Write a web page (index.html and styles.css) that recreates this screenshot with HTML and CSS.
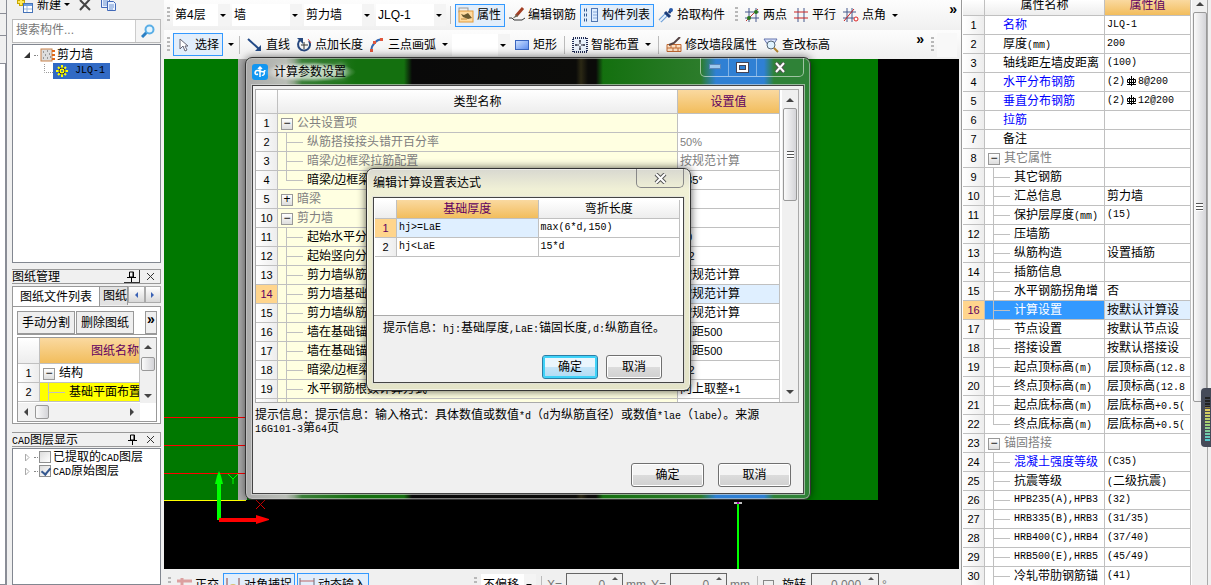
FILE: index.html
```html
<!DOCTYPE html>
<html lang="zh-CN">
<head>
<meta charset="utf-8">
<title>钢筋算量</title>
<link rel="stylesheet" href="styles.css">
</head>
<body>
<div class="rail"><i></i><i></i><b></b></div>
<aside class="left">
  <div class="mini-bar">
    <button class="flat"><svg width="18" height="16"><path d="M5 1v8M1 5h8" stroke="#c9a800" stroke-width="4"/><path d="M5 2v6M2 5h6" stroke="#ffe95a" stroke-width="2"/><rect x="7.500" y="6.500" width="9" height="9" fill="#fff" stroke="#4573b8"/><path d="M8 8h8" stroke="#6f9ee0" stroke-width="2"/><path d="M8 12h8M11 9v6" stroke="#9ab7de"/></svg>新建<span class="caret"></span></button>
    <button class="flat" aria-label="删除"><svg width="14" height="14"><path d="M2 2l10 10M12 1L2 12" stroke="#444" stroke-width="2" fill="none"/></svg></button>
    <button class="flat" aria-label="复制"><svg width="18" height="16"><path d="M1.500 1.500h8v9h-8z" fill="#eaf2ff" stroke="#4169b8"/><path d="M3 4h5M3 6h5M3 8h4" stroke="#6f94d0"/><path d="M7.500 4.500h6l2 2v7h-8z" fill="#eaf2ff" stroke="#4169b8"/><path d="M9 8h5M9 10h5M9 12h4" stroke="#6f94d0"/></svg></button>
  </div>
  <div class="search"><input type="text" placeholder="搜索构件..." aria-label="搜索构件"><button class="flat" aria-label="搜索"><svg width="14" height="14"><path d="M6 8L1 13" stroke="#2b7fc4" stroke-width="3"/><circle cx="8.500" cy="5.500" r="4" fill="#e4f5ff" stroke="#5aaee6" stroke-width="2"/></svg></button></div>
  <div class="tree">
    <div class="node"><svg width="9" height="9"><path d="M7 1v6H1z" fill="#333"/></svg><span class="dots"></span><svg width="15" height="14"><rect x="1" y="1" width="11" height="12" fill="#ddd" stroke="#c9824b"/><path d="M3 4h1M7 3h1M5 7h1M9 6h1M3 10h1M7 10h1M10 9h1" stroke="#555"/><path d="M12 3h3M12 7h3M12 11h3" stroke="#e06b1c" stroke-width="2"/></svg><span>剪力墙</span></div>
    <div class="node leaf"><svg class="elbow" width="9" height="14"><path d="M.5 0v8.500H9" fill="none" stroke="#999" stroke-dasharray="1 1"/></svg><span class="sel"><svg width="12" height="12"><path d="M6 0v12M0 6h12M2 2l8 8M10 2l-8 8" stroke="#ff0" stroke-width="2"/><circle cx="6" cy="6" r="3" fill="#ff0" stroke="#333"/><circle cx="6" cy="6" r="1" fill="#315fb5"/></svg><span class="m">JLQ-1</span></span></div>
  </div>
  <div class="dock first"><span>图纸管理</span><button class="pin raised" aria-label="固定"><svg width="9" height="11"><path d="M2.500 1h4v5h-4zM0 6.500h9M4.500 7v4M6 1v5" fill="none" stroke="#000"/></svg></button><button class="pin" aria-label="关闭"><svg width="9" height="9"><path d="M1 1l7 7M8 1L1 8" stroke="#333"/></svg></button></div>
  <div class="tabs"><button class="tab on">图纸文件列表</button><button class="tab">图纸</button><button class="arr" aria-label="向左"><span class="tl"></span></button><button class="arr" aria-label="向右"><span class="tr"></span></button></div>
  <div class="sheet">
    <div class="sheet-bar"><button>手动分割</button><button>删除图纸</button><button class="more">»</button></div>
    <div class="sheet-grid">
      <div class="clip"><table class="grid draw"><colgroup><col class="cn"><col></colgroup>
        <thead><tr><th></th><th class="gold">图纸名称</th></tr></thead>
        <tbody><tr><th>1</th><td class="g"><button class="box">−</button>结构</td></tr><tr><th>2</th><td class="c yel">基础平面布置</td></tr></tbody></table></div>
      <div class="vs"><span class="tu"></span><span class="thumb"></span><span class="td"></span></div>
      <div class="hs"><span class="tl"></span><span class="thumb"></span><span class="tr"></span></div>
    </div>
  </div>
  <div class="dock second"><span><span class="m">CAD</span>图层显示</span><button class="pin" aria-label="固定"><svg width="9" height="11"><path d="M2.500 1h4v5h-4zM0 6.500h9M4.500 7v4M6 1v5" fill="none" stroke="#000"/></svg></button><button class="pin" aria-label="关闭"><svg width="9" height="9"><path d="M1 1l7 7M8 1L1 8" stroke="#333"/></svg></button></div>
  <div class="layers">
    <label><svg width="5" height="9"><path d="M.5 1v7L4 4.500z" fill="#fff" stroke="#aaa"/></svg><span class="dots"></span><input type="checkbox"><span>已提取的<span class="m">CAD</span>图层</span></label>
    <label><svg width="5" height="9"><path d="M.5 1v7L4 4.500z" fill="#fff" stroke="#aaa"/></svg><span class="dots"></span><input type="checkbox" checked><span><span class="m">CAD</span>原始图层</span></label>
  </div>
</aside>

<main>
  <div class="bar">
    <span class="grip"></span>
    <span class="combo w1"><select aria-label="楼层"><option>第4层</option></select></span>
    <span class="combo w2"><select aria-label="构件类别"><option>墙</option></select></span>
    <span class="combo w2"><select aria-label="构件类型"><option>剪力墙</option></select></span>
    <span class="combo w2"><select aria-label="构件名称"><option>JLQ-1</option></select></span>
    <span class="sep"></span>
    <button class="tool on"><svg width="16" height="16"><rect x="1" y="1" width="9" height="4" fill="#eee" stroke="#999"/><rect x="1" y="4" width="14" height="11" fill="#ffdba0" stroke="#e09a3c"/><path d="M3 7l3 1 4-2 4 5-4 1-5-2z" fill="#6a5a30"/><path d="M3 12h6" stroke="#b98536"/></svg>属性</button>
    <button class="tool"><svg width="16" height="16"><path d="M0 11h3l2 2h8l3-2" fill="none" stroke="#333"/><path d="M14 1L7 9" stroke="#a33f24" stroke-width="3"/><path d="M8 7l-5 5 6-3z" fill="#665"/></svg>编辑钢筋</button>
    <button class="tool on"><svg width="16" height="16"><path d="M1 3h4M1 8h4M1 13h4" stroke="#33588f" stroke-width="3" stroke-dasharray="1 1"/><rect x="8.500" y="1.500" width="6" height="13" fill="#dcecff" stroke="#5276b0"/><path d="M10 5h4M10 8h4M10 11h4" stroke="#86a8db"/></svg>构件列表</button>
    <button class="tool"><svg width="16" height="16"><path d="M2 14l7-7" stroke="#6d9ed6" stroke-width="4"/><path d="M2 14l6-6" stroke="#e7f3ff" stroke-width="2"/><path d="M7 5l5 5M11 6l2-3" stroke="#1c3d7a" stroke-width="3"/><circle cx="13" cy="3" r="2" fill="#2859a8"/></svg>拾取构件</button>
    <span class="grip next"></span>
    <button class="tool"><svg width="16" height="16"><path d="M5 1v14M12 1v14M1 5h14M1 11h14" stroke="#44588c"/><path d="M2 14L14 2" stroke="#b33"/><circle cx="5" cy="11" r="2" fill="#2a7a20"/><circle cx="12" cy="5" r="2" fill="#2a7a20"/></svg>两点</button>
    <button class="tool"><svg width="16" height="16"><path d="M5 1v14M11 1v14" stroke="#44588c"/><path d="M1 5h14M1 11h14" stroke="#c22"/></svg>平行</button>
    <button class="tool"><svg width="17" height="16"><path d="M5 1v14M10 1v14M1 5h13M1 11h11" stroke="#44588c"/><path d="M2 14L12 2" stroke="#c22"/><circle cx="14" cy="12" r="2" fill="#fff" stroke="#d22"/></svg>点角<span class="caret"></span></button>
    <span class="more">»</span>
  </div>
  <div class="bar two">
    <span class="grip"></span>
    <button class="tool on pick"><svg width="16" height="16"><path d="M4 2v10l3-3 2 5 2-1-2-4h3z" fill="#fff" stroke="#667" /></svg>选择</button><span class="caret"></span>
    <span class="sep"></span>
    <button class="tool"><svg width="16" height="16"><path d="M1 2l11 10" stroke="#234a86" stroke-width="2"/><path d="M14 8v6H8z" fill="#234a86"/></svg>直线</button>
    <button class="tool"><svg width="16" height="16"><path d="M4 3a6 6 0 1 0 9 1" fill="none" stroke="#27487f" stroke-width="2"/><path d="M1 1h6v6z" fill="#27487f"/><path d="M8 5v7M5 8h7" stroke="#333"/><path d="M12 2l3 4" stroke="#d55"/></svg>点加长度</button>
    <button class="tool"><svg width="16" height="16"><path d="M2 14C3 7 6 3 13 2" fill="none" stroke="#3768b0" stroke-width="2"/><path d="M1 12h3v3H1zM4 4h3v3H4zM11 1h3v3h-3z" fill="#e0563c"/></svg>三点画弧<span class="caret far"></span></button>
    <span class="combo w3"><select aria-label="画法"><option></option></select></span>
    <button class="tool"><svg width="16" height="16"><defs><linearGradient id="b" x2="1" y2="1"><stop stop-color="#cfe2ff"/><stop offset="1" stop-color="#5c8df0"/></linearGradient></defs><rect x="1.500" y="3.500" width="13" height="9" fill="url(#b)" stroke="#3a66c0"/></svg>矩形</button>
    <span class="sep"></span>
    <button class="tool"><svg width="16" height="16"><rect x="1" y="1" width="14" height="14" fill="#e8f0fa" stroke="#222d55" stroke-width="2" stroke-dasharray="1 1"/><path d="M8 3v4M8 9v4M3 8h4M9 8h4M7 4h2M7 12h2M4 7v2M12 7v2" stroke="#223"/></svg>智能布置<span class="caret"></span></button>
    <span class="sep"></span>
    <button class="tool"><svg width="16" height="16"><path d="M1 7.500h14v7H1zM1 11h14M5 8v3M10 8v3M7 11v4M12 11v4" fill="#fbe0c4" stroke="#c06830"/><path d="M14 0L8 6l-5 2" stroke="#544" stroke-width="2" fill="none"/></svg>修改墙段属性</button>
    <button class="tool"><svg width="16" height="16"><path d="M1 2h13l-4 6H5z" fill="#dde5ff" stroke="#6575ad"/><circle cx="8" cy="8" r="4" fill="#dff3ff" stroke="#567"/><path d="M11 11l4 4" stroke="#b5862d" stroke-width="2"/></svg>查改标高</button>
    <span class="more">»</span><span class="grip"></span><span class="stub"></span>
  </div>
  <section class="canvas">
    <svg width="100%" height="100%">
      <rect width="100%" height="100%"/>
      <rect width="714" height="441" fill="#007800"/>
      <rect x="74" width="9" height="441" fill="#aaa"/>
      <g fill="#f00"><rect y="358" width="81" height="1"/><rect y="386" width="81" height="1"/><rect y="414" width="81" height="1"/></g>
      <rect y="441" width="82" height="1" fill="#ff0"/>
      <path d="M55 461v-38" stroke="#0f0" stroke-width="4"/><path d="M51 425h8l-2-8-2-5-2 5z" fill="#0f0"/>
      <path d="M55 461h38" stroke="#f00" stroke-width="4"/><path d="M92 456v9l13-4v-1z" fill="#f00"/>
      <path d="M64 415l5 5 5-5M69 420v5" fill="none" stroke="#0f0"/>
      <path d="M92 450l9-9M92 441l9 9" stroke="#d00"/>
      <path d="M574 443v67" stroke="#0f0" stroke-width="2"/><path d="M570 444h8" stroke="#ddd" stroke-width="2"/><path d="M573 444h2" stroke="#c0c" stroke-width="2"/>
    </svg>
  </section>
  <div class="status">
    <div class="sgroup"><span class="grip"></span>
      <button class="tool"><svg width="16" height="16"><path d="M1 4h15M6 1v15" stroke="#dca0a0" stroke-width="3"/><path d="M8 8v6l4-2z" fill="#9ab"/></svg>正交</button>
      <button class="tool on s"><svg width="16" height="16"><path d="M2 1v10M14 1v10" stroke="#844" /><path d="M0 8h4l-2 3zM12 8h4l-2 3z" fill="#844"/><circle cx="8" cy="11" r="4" fill="#d8c070"/></svg>对角捕捉</button>
      <button class="tool on s"><svg width="16" height="16"><path d="M1 1v14M15 1v14" stroke="#667"/><path d="M1 4h14" stroke="#b66"/><path d="M1 9h14M1 12h14" stroke="#667"/></svg>动态输入</button></div>
    <div class="sgroup b"><span class="grip"></span>
      <span class="combo w4"><select aria-label="偏移"><option>不偏移</option></select></span><span class="sep"></span>
      <label>X=<span class="spin"><input type="text" value="0"></span></label><span class="u">mm</span>
      <label>Y=<span class="spin"><input type="text" value="0"></span></label><span class="u">mm</span><span class="sep"></span>
      <label class="rot"><input type="checkbox">旋转</label><span class="spin"><input class="deg" type="text" value="0.000" aria-label="角度"></span><span>°</span></div>
  </div>

  <section class="win big" role="dialog" aria-label="计算参数设置">
    <header><svg width="16" height="16"><rect width="16" height="16" rx="3" fill="#1296f0"/><path d="M8 3v10M6 5l2-2 2 2M3 9c0-3 3-3 5-2s5 1 5-1M4 7c-2 3 0 4 2 3M12 8c1 2-1 4-2 3" fill="none" stroke="#fff" stroke-width="1.500"/></svg><h1><span>计算参数设置</span></h1>
      <div class="caps"><button aria-label="最小化"><svg width="12" height="6"><rect x=".5" y=".5" width="11" height="4" fill="#9cc8ee" stroke="#5a86b8"/></svg></button><button aria-label="最大化"><svg width="13" height="11"><rect x="2" y="2" width="9" height="7" fill="none" stroke="#445" stroke-width="4"/><rect x="2" y="2" width="9" height="7" fill="none" stroke="#fff" stroke-width="2"/></svg></button><button class="cx" aria-label="关闭"><svg width="12" height="11"><path d="M2 1l8 9M10 1L2 10" stroke="#555" stroke-width="4"/><path d="M2 1l8 9M10 1L2 10" stroke="#fff" stroke-width="2"/></svg></button></div></header>
    <div class="client">
      <div class="frame">
        <div class="clip"><table class="grid calc"><colgroup><col class="cn"><col><col class="cv"></colgroup>
        <thead><tr><th></th><th class="h">类型名称</th><th class="gold">设置值</th></tr></thead>
        <tbody>
        <tr><th>1</th><td class="g"><button class="box">−</button>公共设置项</td><td></td></tr>
        <tr><th>2</th><td class="c dim">纵筋搭接接头错开百分率</td><td class="dim n">50%</td></tr>
        <tr><th>3</th><td class="c dim">暗梁/边框梁拉筋配置</td><td class="dim">按规范计算</td></tr>
        <tr><th>4</th><td class="c last">暗梁/边框梁</td><td class="n">135°</td></tr>
        <tr><th>5</th><td class="g"><button class="box">+</button>暗梁</td><td></td></tr>
        <tr><th>10</th><td class="g"><button class="box">−</button>剪力墙</td><td></td></tr>
        <tr><th>11</th><td class="c">起始水平分</td><td class="n">50</td></tr>
        <tr><th>12</th><td class="c">起始竖向分</td><td class="n">s/2</td></tr>
        <tr><th>13</th><td class="c">剪力墙纵筋</td><td>按规范计算</td></tr>
        <tr><th class="cur">14</th><td class="c">剪力墙基础</td><td class="hot">按规范计算</td></tr>
        <tr><th>15</th><td class="c">剪力墙纵筋</td><td>按规范计算</td></tr>
        <tr><th>16</th><td class="c">墙在基础锚</td><td>间距<span class="n">500</span></td></tr>
        <tr><th>17</th><td class="c">墙在基础锚</td><td>间距<span class="n">500</span></td></tr>
        <tr><th>18</th><td class="c">暗梁/边框梁</td><td class="n">s/2</td></tr>
        <tr><th>19</th><td class="c">水平钢筋根数计算方式</td><td>向上取整<span class="n">+1</span></td></tr>
        <tr><th></th><td class="c"></td><td></td></tr>
        </tbody></table></div>
        <div class="vs"><span class="tu"></span><span class="thumb"><i></i></span><span class="td"></span></div>
      </div>
      <p class="hint">提示信息：提示信息：输入格式：具体数值或数值<span class="m">*d</span>（<span class="m">d</span>为纵筋直径）或数值<span class="m">*lae</span>（<span class="m">labe</span>）。来源<br><span class="m">16G101-3</span>第<span class="m">64</span>页</p>
      <div class="acts"><button class="push">确定</button><button class="push">取消</button></div>
    </div>
  </section>

  <section class="win small" role="dialog" aria-label="编辑计算设置表达式">
    <header><h1>编辑计算设置表达式</h1><div class="caps"><button aria-label="关闭"><svg width="13" height="11"><path d="M2 1l9 9M11 1L2 10" stroke="#555" stroke-width="4"/><path d="M2 1l9 9M11 1L2 10" stroke="#fff" stroke-width="2"/></svg></button></div></header>
    <div class="client">
      <div class="frame"><table class="grid expr"><colgroup><col class="cn"><col><col></colgroup>
        <thead><tr><th></th><th class="gold">基础厚度</th><th class="h">弯折长度</th></tr></thead>
        <tbody><tr><th class="cur">1</th><td class="hot m">hj&gt;=LaE</td><td class="m">max(6*d,150)</td></tr><tr><th>2</th><td class="m">hj&lt;LaE</td><td class="m">15*d</td></tr></tbody></table></div>
      <p class="hint">提示信息：<span class="m">hj:</span>基础厚度<span class="m">,LaE:</span>锚固长度<span class="m">,d:</span>纵筋直径。</p>
      <div class="acts"><button class="push def">确定</button><button class="push">取消</button></div>
    </div>
  </section>
</main>

<aside class="right">
  <div class="props"><table class="grid prop"><colgroup><col class="cn"><col><col class="cp"></colgroup>
    <thead><tr><th></th><th class="h">属性名称</th><th class="gold">属性值</th></tr></thead>
    <tbody>
    <tr><th>1</th><td class="t blue">名称</td><td class="m">JLQ-1</td></tr>
    <tr><th>2</th><td class="t">厚度<span class="m">(mm)</span></td><td class="m">200</td></tr>
    <tr><th>3</th><td class="t">轴线距左墙皮距离</td><td class="m">(100)</td></tr>
    <tr><th>4</th><td class="t blue">水平分布钢筋</td><td class="m">(2)<svg class="rebar" width="11" height="10"><path d="M5.500 0v10M1 8.500h9M1.500 3.500h8v3h-8zM3.500 2v7M7.500 2v7" fill="none" stroke="#000"/></svg>8@200</td></tr>
    <tr><th>5</th><td class="t blue">垂直分布钢筋</td><td class="m">(2)<svg class="rebar" width="11" height="10"><path d="M5.500 0v10M1 8.500h9M1.500 3.500h8v3h-8zM3.500 2v7M7.500 2v7" fill="none" stroke="#000"/></svg>12@200</td></tr>
    <tr><th>6</th><td class="t blue">拉筋</td><td></td></tr>
    <tr><th>7</th><td class="t">备注</td><td></td></tr>
    <tr><th>8</th><td class="g"><button class="box">−</button>其它属性</td><td></td></tr>
    <tr><th>9</th><td class="c">其它钢筋</td><td></td></tr>
    <tr><th>10</th><td class="c">汇总信息</td><td>剪力墙</td></tr>
    <tr><th>11</th><td class="c">保护层厚度<span class="m">(mm)</span></td><td class="m">(15)</td></tr>
    <tr><th>12</th><td class="c">压墙筋</td><td></td></tr>
    <tr><th>13</th><td class="c">纵筋构造</td><td>设置插筋</td></tr>
    <tr><th>14</th><td class="c">插筋信息</td><td></td></tr>
    <tr><th>15</th><td class="c">水平钢筋拐角增</td><td>否</td></tr>
    <tr><th class="cur">16</th><td class="c pick">计算设置</td><td class="hot">按默认计算设</td></tr>
    <tr><th>17</th><td class="c">节点设置</td><td>按默认节点设</td></tr>
    <tr><th>18</th><td class="c">搭接设置</td><td>按默认搭接设</td></tr>
    <tr><th>19</th><td class="c">起点顶标高<span class="m">(m)</span></td><td>层顶标高<span class="m">(12.8</span></td></tr>
    <tr><th>20</th><td class="c">终点顶标高<span class="m">(m)</span></td><td>层顶标高<span class="m">(12.8</span></td></tr>
    <tr><th>21</th><td class="c">起点底标高<span class="m">(m)</span></td><td>层底标高<span class="m">+0.5(</span></td></tr>
    <tr><th>22</th><td class="c last">终点底标高<span class="m">(m)</span></td><td>层底标高<span class="m">+0.5(</span></td></tr>
    <tr><th>23</th><td class="g"><button class="box">−</button>锚固搭接</td><td></td></tr>
    <tr><th>24</th><td class="c blue">混凝土强度等级</td><td class="m">(C35)</td></tr>
    <tr><th>25</th><td class="c">抗震等级</td><td><span class="m">(</span>二级抗震<span class="m">)</span></td></tr>
    <tr><th>26</th><td class="c m">HPB235(A),HPB3</td><td class="m">(32)</td></tr>
    <tr><th>27</th><td class="c m">HRB335(B),HRB3</td><td class="m">(31/35)</td></tr>
    <tr><th>28</th><td class="c m">HRB400(C),HRB4</td><td class="m">(37/40)</td></tr>
    <tr><th>29</th><td class="c m">HRB500(E),HRB5</td><td class="m">(45/49)</td></tr>
    <tr><th>30</th><td class="c">冷轧带肋钢筋锚</td><td class="m">(41)</td></tr>
    </tbody></table></div>
  <div class="vs"><span class="tu"></span><span class="thumb"><i></i></span></div>
  <div class="meter"><i></i></div>
</aside>
</body>
</html>
```
FILE: styles.css
```css
* { box-sizing: border-box; }
body {
  margin: 0; height: 100vh; overflow: hidden; display: flex; background: #f0f0f0;
  font: 12px/18px "Liberation Sans", "Noto Sans CJK SC", sans-serif; color: #000;
}
button, input, select { font: inherit; color: inherit; margin: 0; padding: 0; }
button { background: none; border: 0; white-space: nowrap; }
svg { flex: none; display: block; }
.m { font-family: "Liberation Mono", "Noto Sans CJK SC", monospace; font-size: 10px; }
.n { font-size: 11px; }
span.m, span.n { line-height: 1; }

.caret { flex: none; width: 0; border: 3px solid transparent; border-top-color: #000; border-bottom: 0; }
.tl, .tr, .tu, .td { flex: none; width: 0; height: 0; border: 4px solid transparent; }
.tl { border-right-color: #444; border-left: 0; }
.tr { border-left-color: #444; border-right: 0; }
.tu { border-bottom-color: #444; border-top: 0; }
.td { border-top-color: #444; border-bottom: 0; }
.dots { width: 4px; border-top: 1px dotted #888; }

/* left edge */
.rail { width: 7px; border-right: 1px solid #8a8d96; display: flex; flex-direction: column; flex: none; }
.rail i { height: 14px; border-bottom: 1px solid #8a8d96; }
.rail i + i { height: 22px; }
.rail b { margin-top: 27px; flex: 1; background: #fff; border: 1px solid #8a8d96; border-left: 0; }

.left { width: 154px; margin-right: 3px; padding-left: 5px; display: flex; flex-direction: column; flex: none; min-height: 0; }
.mini-bar { height: 19px; display: flex; gap: 8px; align-items: flex-start; padding-left: 4px; overflow: hidden; }
.flat { display: flex; align-items: center; gap: 3px; }
.mini-bar .flat { height: 9px; }
.search { height: 24px; display: flex; border: 1px solid #bbb; background: #f4f4f4; margin-bottom: 1px; }
.search input { width: 123px; border: 0; border-right: 1px solid #ccc; background: #fff; padding: 0 0 3px 3px; outline: 0; }
.search input::placeholder { color: #777; opacity: 1; }
.search .flat { margin-left: 5px; }
.tree { height: 219px; background: #fff; border: 1px solid #828790; padding: 2px 0 0 10px; }
.node { display: flex; align-items: center; height: 16px; gap: 2px; }
.node > span:last-child { margin-left: 0; }
.leaf { padding-left: 21px; gap: 0; }
.leaf .sel { display: flex; align-items: center; gap: 7px; height: 16px; padding: 0 5px 0 3px; background: #316ac5; }
.dock { height: 15px; line-height: 14px; display: flex; align-items: center; border: 1px solid #999; border-left: 0; flex: none; }
.dock > span { flex: 1; white-space: nowrap; }
.first { margin-top: 6px; }
.second { margin-top: 8px; }
.pin { width: 16px; height: 13px; display: flex; align-items: center; justify-content: center; margin-right: 2px; }
.raised { border: solid #333; border-width: 0 1px 1px 0; }
.tabs { margin-top: 2px; height: 20px; display: flex; align-items: flex-start; flex: none; }
.tab { height: 19px; padding: 0 7px; border: 1px solid #999; border-bottom: 0; background: #e2e2e2; flex: none; }
.tab.on { background: #fff; height: 20px; }
.tab:nth-child(2) { width: 28px; padding: 0 0 0 3px; overflow: hidden; border-left: 0; }
.arr { flex: 1; height: 17px; border: 1px solid #aaa; background: linear-gradient(#fff, #d8d8d8); display: flex; align-items: center; justify-content: center; }
.arr .tl { border-right-color: #3a62b5; border-width: 3px 3px 3px 0; }
.arr .tr { border-left-color: #3a62b5; border-width: 3px 0 3px 3px; }
.sheet { height: 118px; border: 1px solid #999; background: #fff; padding: 4px 3px 3px 4px; flex: none; }
.sheet-bar { display: flex; gap: 1px; height: 24px; border-bottom: 1px solid #999; }
.sheet-bar button { border: 1px solid #999; background: #efefef; padding: 0 4px; height: 23px; }
.sheet-bar .more { margin-left: auto; width: 12px; padding: 0; line-height: 12px; padding-bottom: 8px; overflow: hidden; }
.sheet-grid { margin-top: 2px; border: 1px solid #999; display: grid; grid-template-columns: 1fr 16px; grid-template-rows: 65px 18px; }
.clip { overflow: hidden; min-width: 0; }
.hs { display: flex; align-items: center; gap: 7px; padding: 0 6px; background: #f2f2f2; }
.hs .tr { margin-left: auto; }
.hs .thumb { width: 14px; height: 14px; }
.vs { display: flex; flex-direction: column; align-items: center; background: #f0f0f0; }
.vs .td { margin-top: auto; }
.thumb { border: 1px solid #999; border-radius: 2px; background: linear-gradient(90deg, #fafafa, #d4d4d8); flex: none; display: flex; align-items: center; justify-content: center; }
.thumb i { width: 7px; height: 8px; background: repeating-linear-gradient(#555 0 1px, #fff 1px 3px); }
.sheet-grid .vs { padding: 7px 0 5px; }
.sheet-grid .vs .thumb { width: 14px; height: 14px; margin-top: 8px; }
.layers { margin-top: 1px; flex: 1; border: 1px solid #828790; background: #fff; padding: 1px 0 0 12px; }
.layers label { display: flex; align-items: center; height: 14px; gap: 4px; white-space: nowrap; }
.layers input { appearance: none; width: 12px; height: 12px; border: 1px solid #8e8f8f; background: linear-gradient(135deg, #ddd, #fff); flex: none; margin: 0 -2px 0 -3px; }
.layers input:checked::before { content: ""; display: block; width: 4px; height: 7px; margin: 0 3px; border: solid #35588f; border-width: 0 2px 2px 0; transform: rotate(40deg); }

/* grids */
.grid { width: 100%; table-layout: fixed; border-collapse: separate; border-spacing: 0; background: #fff; line-height: 18px; }
.grid th, .grid td { height: 19px; padding: 0 0 0 2px; border: solid #c0c0c0; border-width: 0 1px 1px 0; text-align: left; font-weight: normal; white-space: nowrap; overflow: hidden; }
.grid th { padding: 0; text-align: center; background: linear-gradient(90deg, #fff, #ededed); font-size: 11px; }
.grid thead th { background: linear-gradient(#fff, #ededed); font-size: 12px; }
.grid thead .gold { background: linear-gradient(#fad9a0, #f2bd5c); color: #600060; }
.grid .cur { background: #ffd58d; color: #600060; }
.grid td.m { font-size: 10px; }
.grid td.n { font-size: 11px; }
.cn { width: 22px; }
.cv { width: 102px; }
.cp { width: 86px; }
.grid .t { padding-left: 18px; }
.grid .g { padding-left: 3px; color: #808080; }
.grid .c {
  padding-left: 29px;
  background-image: linear-gradient(#c0c0c0, #c0c0c0), linear-gradient(#c0c0c0, #c0c0c0);
  background-size: 1px 100%, 17px 1px; background-position: 8px 0, 8px 9px; background-repeat: no-repeat;
}
.grid .last { background-size: 1px 9px, 17px 1px; }
.box { width: 12px; height: 12px; margin-right: 4px; border: 1px solid #999; background: linear-gradient(#fff, #ddd); color: #000; font-size: 12px; line-height: 9px; vertical-align: middle; overflow: hidden; }
.grid .g { line-height: 16px; }
.grid .dim { color: #808080; }
.grid .blue { color: #00f; }
.grid .hot { background: #dfefff; }
.grid .pick { background-color: #3399ff; color: #fff; }
.calc td:nth-child(2) { background-color: #ffffe1; }
.calc thead th { height: 24px; }
.draw thead th { height: 26px; }
.draw .gold { text-align: right; }
.draw .g { color: #000; }
.draw .yel { background-color: #ff0; }
.rebar { display: inline-block; vertical-align: -2px; margin: 0 1px; }

/* toolbars */
main { flex: 1; min-width: 0; position: relative; display: flex; flex-direction: column; }
.bar { height: 30px; flex: none; display: flex; align-items: center; gap: 2px; padding: 0 4px 0 3px; background: linear-gradient(#fdfdfd, #f0f0f0); overflow: hidden; }
.bar.two { height: 29px; }
.grip { width: 3px; height: 16px; margin-right: 1px; flex: none; background: repeating-linear-gradient(#b8b8b8 0 2px, transparent 2px 4px); }
.next { margin: 0 2px 0 6px; }
.combo { position: relative; flex: none; background: #fff; height: 22px; }
.combo select { appearance: none; border: 0; width: 100%; height: 100%; background: linear-gradient(90deg, transparent 0 calc(100% - 12px), #f4f4f4 0); padding-left: 2px; outline: 0; opacity: 1; }
.combo::after { content: ""; position: absolute; right: 4px; top: 10px; border: 3px solid transparent; border-top-color: #000; border-bottom: 0; pointer-events: none; }
.w1 { width: 57px; }
.w2 { width: 70px; }
.w3 { width: 58px; }
.w4 { width: 55px; }
.sep { width: 1px; height: 18px; margin: 0 2px; background: #bbb; flex: none; }
.two .sep { margin: 0 3px; }
.tool { height: 23px; display: flex; align-items: center; gap: 3px; padding: 0 1px; border: 1px solid transparent; flex: none; }
.tool.on { border-color: #3399ff; background: #e2eefb; padding: 0 3px 0 2px; }
.two .caret { margin-left: 3px; }
.tool .caret { margin-left: 3px; }
.more { font-size: 14px; font-weight: bold; }
.bar .more { margin-left: auto; padding-bottom: 12px; }
.bar.two .more { margin-right: 5px; }
.stub { width: 20px; height: 24px; background: #f8f8f8; flex: none; }
.canvas { flex: 1; min-height: 0; overflow: hidden; margin-right: 2px; }
.status { height: 16px; flex: none; overflow: hidden; padding-top: 4px; display: flex; align-items: flex-start; }
.sgroup { display: flex; align-items: center; gap: 2px; height: 24px; padding-left: 4px; flex: none; }
.sgroup .tool { height: 24px; }
.sgroup .tool.s { padding: 0 2px 0 1px; }
.sgroup.b { margin-left: 101px; color: #777; gap: 3px; }
.sgroup.b label { display: flex; align-items: center; gap: 4px; }
.sgroup.b input[type="text"] { width: 57px; height: 24px; border: 1px solid #666; background: #f0f0f0; text-align: right; padding-right: 17px; display: block; }
.sgroup.b input.deg { width: 68px; }
.spin { position: relative; }
.spin::after { content: ""; position: absolute; right: 5px; top: 4px; border: 3px solid transparent; border-bottom-color: #555; border-top: 0; }
.sgroup select, .rot { color: #000; }
.rot input { appearance: none; width: 11px; height: 11px; border: 1px solid #888; margin: 0 4px 0 0; }
.rot { margin-right: 2px; }
.u { margin-right: 2px; }

/* dialog windows */
.win { position: absolute; border: 1px solid #333; border-radius: 7px; display: flex; flex-direction: column; box-shadow: 0 0 0 1px #ccc9 inset, 0 0 8px #0008; }
.win header { display: flex; align-items: center; gap: 6px; flex: none; }
.win h1 { margin: 0; font: inherit; flex: 1; }
.client { flex: 1; background: #f0f0f0; border: 1px solid #444; box-shadow: 0 0 0 1px #ddd9; display: flex; flex-direction: column; min-height: 0; }
.caps { display: flex; align-self: flex-start; border: 1px solid #fff8; border-top: 0; border-radius: 0 0 5px 5px; height: 19px; }
.caps button { width: 28px; display: flex; align-items: center; justify-content: center; border-right: 1px solid #fff6; }
.caps button:last-child { border: 0; }
.caps .cx { width: 46px; }
.big { left: 81px; top: 57px; width: 566px; height: 443px; padding: 0 6px 5px;
  background: linear-gradient(90deg, #aaa 0, #b9bdb6 40px, #8fa58b 48px, #3a7f38 56px, #14700f 110px, #14700f 158px, #090909 166px, #0b0b09 330px, #2b2814 335px, #0b0b09 342px, #0b0b09 350px, #14700f 357px, #2c7c2b 455px, #2f80d4 470px, #2f80d4 518px, #2f8237 528px, #2f8237 100%); }
.big header { height: 27px; }
.big h1 span { background: radial-gradient(closest-side, #fff9 60%, transparent); text-shadow: 0 0 6px #fff; padding: 3px 10px; margin-left: -10px; }
.big .client { padding: 3px 3px 6px 2px; }
.big .frame { border: 1px solid #aaa; background: #fff; display: grid; grid-template-columns: 1fr 16px; column-gap: 2px; height: 314px; flex: none; margin-right: 1px; }
.frame .vs { padding: 8px 0; }
.frame .vs .thumb { width: 14px; height: 93px; margin-top: 6px; }
.hint { margin: 0; }
.big .hint { margin-top: 6px; line-height: 12px; }
.acts { display: flex; justify-content: flex-end; margin-top: auto; }
.big .acts { gap: 14px; padding-right: 9px; }
.push { width: 73px; height: 24px; border: 1px solid #707070; border-radius: 3px; background: linear-gradient(#f4f4f4 50%, #dcdcdc 50%, #d0d0d0); box-shadow: inset 0 0 0 1px #fff; }
.small { left: 202px; top: 168px; width: 325px; height: 223px; padding: 0 6px 7px;
  background: linear-gradient(#d8d8d0, #f0f0d6 20px, #e8e8cc 60%, #e3e3c8); box-shadow: 0 0 0 1px #fff8 inset, 0 0 8px #000a; }
.small header { height: 28px; }
.small .caps { border-color: #888; }
.small .caps button { width: 46px; }
.small .frame { height: 118px; background: #fff; border-bottom: 1px solid #aaa; padding: 2px 3px 0 1px; flex: none; }
.small .hint { padding: 3px 0 0 9px; }
.small .acts { gap: 8px; padding: 0 21px 3px 0; }
.small .push { width: 56px; }
.small .def { border-color: #2a7fa8; background: linear-gradient(#eaf6fd 50%, #c4e5f8 50%, #b0dbf4); box-shadow: inset 0 0 0 2px #3fd2f8; }

/* properties */
.right { width: 250px; border-left: 1px solid #999; padding-left: 1px; display: flex; flex: none; position: relative; overflow: hidden; background: #fff; }
.props { width: 228px; overflow: hidden; }
.prop thead th { height: 16px; line-height: 10px; padding-bottom: 5px; }
.right .vs { width: 16px; margin-left: 1px; border-right: 1px solid #aaa; padding-top: 2px; }
.right .vs .thumb { width: 14px; height: 390px; margin-top: 6px; }
.right::after { content: ""; flex: 1; background: #f0f0f0; }
.meter { position: absolute; right: 0; top: 388px; width: 10px; height: 59px; background: #454a58; border-radius: 4px 0 0 4px; padding: 8px 1px 6px 4px; }
.meter i { display: block; height: 100%; background: repeating-linear-gradient(#454a58 0 1px, transparent 1px 3px), linear-gradient(#222 25%, #e8c85a 26%, #a8d070 60%, #50c8d0); }
```
